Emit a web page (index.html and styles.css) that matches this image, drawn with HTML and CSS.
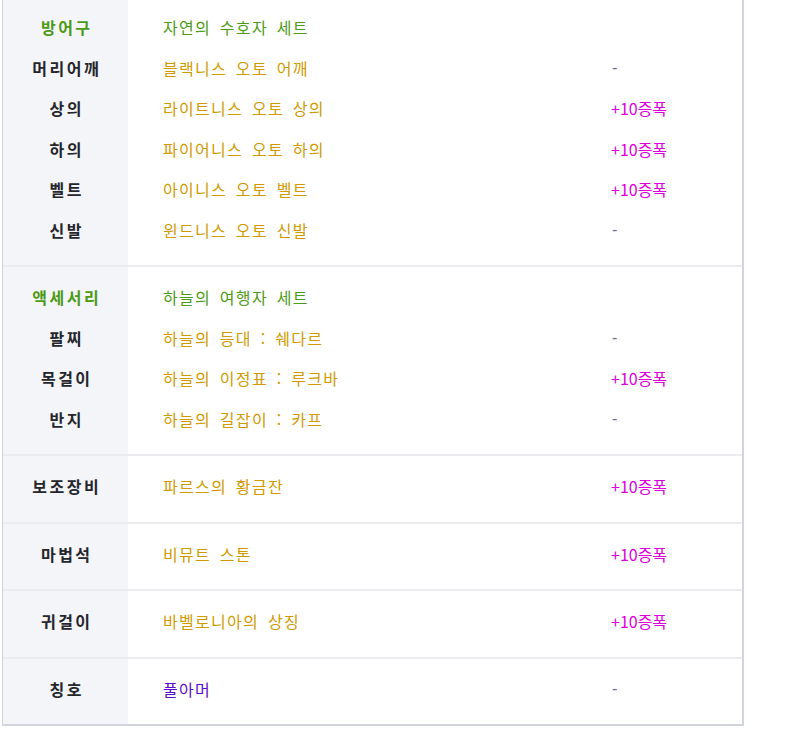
FILE: index.html
```html
<!DOCTYPE html>
<html lang="ko">
<head>
<meta charset="utf-8">
<link rel="stylesheet" href="styles.css">
</head>
<body>
<div class="table">
  <div class="group">
    <div class="labels">
      <div class="row set">방어구</div>
      <div class="row">머리어깨</div>
      <div class="row">상의</div>
      <div class="row">하의</div>
      <div class="row">벨트</div>
      <div class="row">신발</div>
    </div>
    <div class="values">
      <div class="row"><span class="set">자연의 수호자 세트</span><span></span></div>
      <div class="row"><span class="item">블랙니스 오토 어깨</span><span class="dash">-</span></div>
      <div class="row"><span class="item">라이트니스 오토 상의</span><span class="amp">+10증폭</span></div>
      <div class="row"><span class="item">파이어니스 오토 하의</span><span class="amp">+10증폭</span></div>
      <div class="row"><span class="item">아이니스 오토 벨트</span><span class="amp">+10증폭</span></div>
      <div class="row"><span class="item">윈드니스 오토 신발</span><span class="dash">-</span></div>
    </div>
  </div>
  <div class="group">
    <div class="labels">
      <div class="row set">액세서리</div>
      <div class="row">팔찌</div>
      <div class="row">목걸이</div>
      <div class="row">반지</div>
    </div>
    <div class="values">
      <div class="row"><span class="set">하늘의 여행자 세트</span><span></span></div>
      <div class="row"><span class="item">하늘의 등대 : 쉐다르</span><span class="dash">-</span></div>
      <div class="row"><span class="item">하늘의 이정표 : 루크바</span><span class="amp">+10증폭</span></div>
      <div class="row"><span class="item">하늘의 길잡이 : 카프</span><span class="dash">-</span></div>
    </div>
  </div>
  <div class="group">
    <div class="labels"><div class="row">보조장비</div></div>
    <div class="values"><div class="row"><span class="item">파르스의 황금잔</span><span class="amp">+10증폭</span></div></div>
  </div>
  <div class="group">
    <div class="labels"><div class="row">마법석</div></div>
    <div class="values"><div class="row"><span class="item">비뮤트 스톤</span><span class="amp">+10증폭</span></div></div>
  </div>
  <div class="group">
    <div class="labels"><div class="row">귀걸이</div></div>
    <div class="values"><div class="row"><span class="item">바벨로니아의 상징</span><span class="amp">+10증폭</span></div></div>
  </div>
  <div class="group">
    <div class="labels"><div class="row">칭호</div></div>
    <div class="values"><div class="row"><span class="title">풀아머</span><span class="dash">-</span></div></div>
  </div>
</div>
</body>
</html>
```
FILE: styles.css
```css
html, body {
  margin: 0;
  padding: 0;
  background: #ffffff;
}
body {
  font-family: "Noto Sans CJK KR", "Noto Sans", sans-serif;
  font-size: 16px;
}
.table {
  margin: -3px 0 0 2px;
  width: 739px;
  border-left: 1px solid #d3d5dd;
  border-right: 2px solid #d3d5dd;
  border-bottom: 2px solid #d3d5dd;
}
.group {
  display: flex;
  border-bottom: 2px solid #ebecf0;
}
.group:last-child {
  border-bottom: none;
}
.labels {
  width: 125px;
  flex: none;
  background: #f4f5f9;
  padding: 10px 0 15px;
}
.values {
  flex: 1;
  padding: 10px 0 15px;
}
.row {
  height: 40.5px;
  display: flex;
  align-items: center;
}
.labels .row {
  justify-content: center;
  font-weight: bold;
  color: #25262b;
  letter-spacing: 2.5px;
  text-indent: 2.5px;
}
.labels .row.set {
  color: #4c9a16;
}
.values .row {
  display: grid;
  grid-template-columns: 448px 1fr;
  align-items: center;
  padding-left: 35px;
  letter-spacing: 1.3px;
  word-spacing: 3px;
}
.set {
  color: #4c9a16;
}
.item {
  color: #d09a00;
}
.title {
  color: #5a0ccc;
}
.amp {
  color: #dd00dd;
  letter-spacing: 0;
  word-spacing: 0;
}
.dash {
  color: #6c6a86;
  font-family: "Liberation Sans", sans-serif;
  padding-left: 1px;
}
```
